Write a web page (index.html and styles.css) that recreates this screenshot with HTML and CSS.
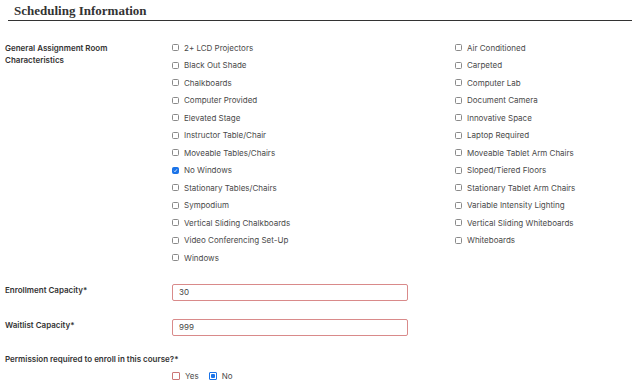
FILE: index.html
```html
<!DOCTYPE html>
<html lang="en">

<head>
    <meta charset="UTF-8">
    <meta name="viewport" content="width=device-width, initial-scale=1.0">
    <title>Scheduling Information</title>
    <link rel="stylesheet" href="styles.css">
</head>

<body>
    <h2 class="section-title">Scheduling Information</h2>

    <!-- Room characteristics -->
    <div class="field field-rooms">
        <div class="field-label">General Assignment Room Characteristics</div>
        <div class="options">
            <label class="option"><input type="checkbox"> 2+ LCD Projectors</label>
            <label class="option"><input type="checkbox"> Air Conditioned</label>
            <label class="option"><input type="checkbox"> Black Out Shade</label>
            <label class="option"><input type="checkbox"> Carpeted</label>
            <label class="option"><input type="checkbox"> Chalkboards</label>
            <label class="option"><input type="checkbox"> Computer Lab</label>
            <label class="option"><input type="checkbox"> Computer Provided</label>
            <label class="option"><input type="checkbox"> Document Camera</label>
            <label class="option"><input type="checkbox"> Elevated Stage</label>
            <label class="option"><input type="checkbox"> Innovative Space</label>
            <label class="option"><input type="checkbox"> Instructor Table/Chair</label>
            <label class="option"><input type="checkbox"> Laptop Required</label>
            <label class="option"><input type="checkbox"> Moveable Tables/Chairs</label>
            <label class="option"><input type="checkbox"> Moveable Tablet Arm Chairs</label>
            <label class="option"><input type="checkbox" checked> No Windows</label>
            <label class="option"><input type="checkbox"> Sloped/Tiered Floors</label>
            <label class="option"><input type="checkbox"> Stationary Tables/Chairs</label>
            <label class="option"><input type="checkbox"> Stationary Tablet Arm Chairs</label>
            <label class="option"><input type="checkbox"> Sympodium</label>
            <label class="option"><input type="checkbox"> Variable Intensity Lighting</label>
            <label class="option"><input type="checkbox"> Vertical Sliding Chalkboards</label>
            <label class="option"><input type="checkbox"> Vertical Sliding Whiteboards</label>
            <label class="option"><input type="checkbox"> Video Conferencing Set-Up</label>
            <label class="option"><input type="checkbox"> Whiteboards</label>
            <label class="option"><input type="checkbox"> Windows</label>
        </div>
    </div>

    <div class="field field-input">
        <div class="field-label">Enrollment Capacity*</div>
        <input class="text-input" type="text" value="30">
    </div>

    <div class="field field-input">
        <div class="field-label">Waitlist Capacity*</div>
        <input class="text-input" type="text" value="999">
    </div>

    <div class="field-permission">
        <div class="field-label">Permission required to enroll in this course?*</div>
        <div class="radios">
            <label class="radio"><span class="radio-box"></span> Yes</label>
            <label class="radio"><span class="radio-box checked"></span> No</label>
        </div>
    </div>
</body>

</html>
```

FILE: styles.css
```css
body {
    margin: 0;
    padding: 0 8px 0 5px;
    font-family: Inter, "Noto Sans", sans-serif;
    font-size: 8px;
    color: #333;
    background: #fff;
}

.section-title {
    margin: 0 0 0 3px;
    padding: 3px 0 1px 6px;
    font-family: "Liberation Serif", serif;
    font-size: 13px;
    font-weight: bold;
    color: #333;
    border-bottom: 1.5px solid #333;
}

.field {
    display: flex;
}

.field-label {
    width: 167px;
    flex-shrink: 0;
    font-weight: 600;
    line-height: 12px;
}

.field-rooms {
    margin-top: 21px;
}

.field-rooms .field-label {
    padding-right: 60px;
    box-sizing: border-box;
}

.options {
    display: grid;
    grid-template-columns: 283px 1fr;
    grid-auto-rows: 17.5px;
    margin-top: -3px;
}

.option {
    display: flex;
    align-items: center;
    gap: 5px;
    color: #4a4a4a;
}

.option input {
    appearance: none;
    width: 7px;
    height: 7px;
    margin: 0;
    border: 1px solid #8a8a8a;
    border-radius: 1.5px;
    background: #fff;
}

.option input:checked {
    border-color: #1a73e8;
    background: #1a73e8 url("data:image/svg+xml,%3Csvg xmlns='http://www.w3.org/2000/svg' viewBox='0 0 10 10'%3E%3Cpath d='M2 5.5l2 2 4-5' fill='none' stroke='white' stroke-width='1.6'/%3E%3C/svg%3E") center / 100% no-repeat;
}

.field-rooms + .field-input {
    margin-top: 17px;
}

.field-input + .field-input {
    margin-top: 18px;
}

.text-input {
    width: 236px;
    height: 17px;
    box-sizing: border-box;
    margin: 0;
    padding: 0 6px;
    font-family: Inter, "Noto Sans", sans-serif;
    font-size: 8px;
    color: #444;
    border: 1px solid #d98a8a;
    border-radius: 2px;
    outline: none;
}

.field-permission {
    margin-top: 17px;
}

.field-permission .field-label {
    width: auto;
}

.radios {
    display: flex;
    gap: 10px;
    margin-top: 6px;
    padding-left: 167px;
}

.radio {
    display: flex;
    align-items: center;
    gap: 5px;
    color: #4a4a4a;
}

.radio-box {
    width: 6px;
    height: 6px;
    border: 1px solid #c77;
    border-radius: 1px;
}

.radio-box.checked {
    border-color: #1a73e8;
    background: radial-gradient(circle, #1a73e8 0 2px, #fff 2.5px);
}
```
